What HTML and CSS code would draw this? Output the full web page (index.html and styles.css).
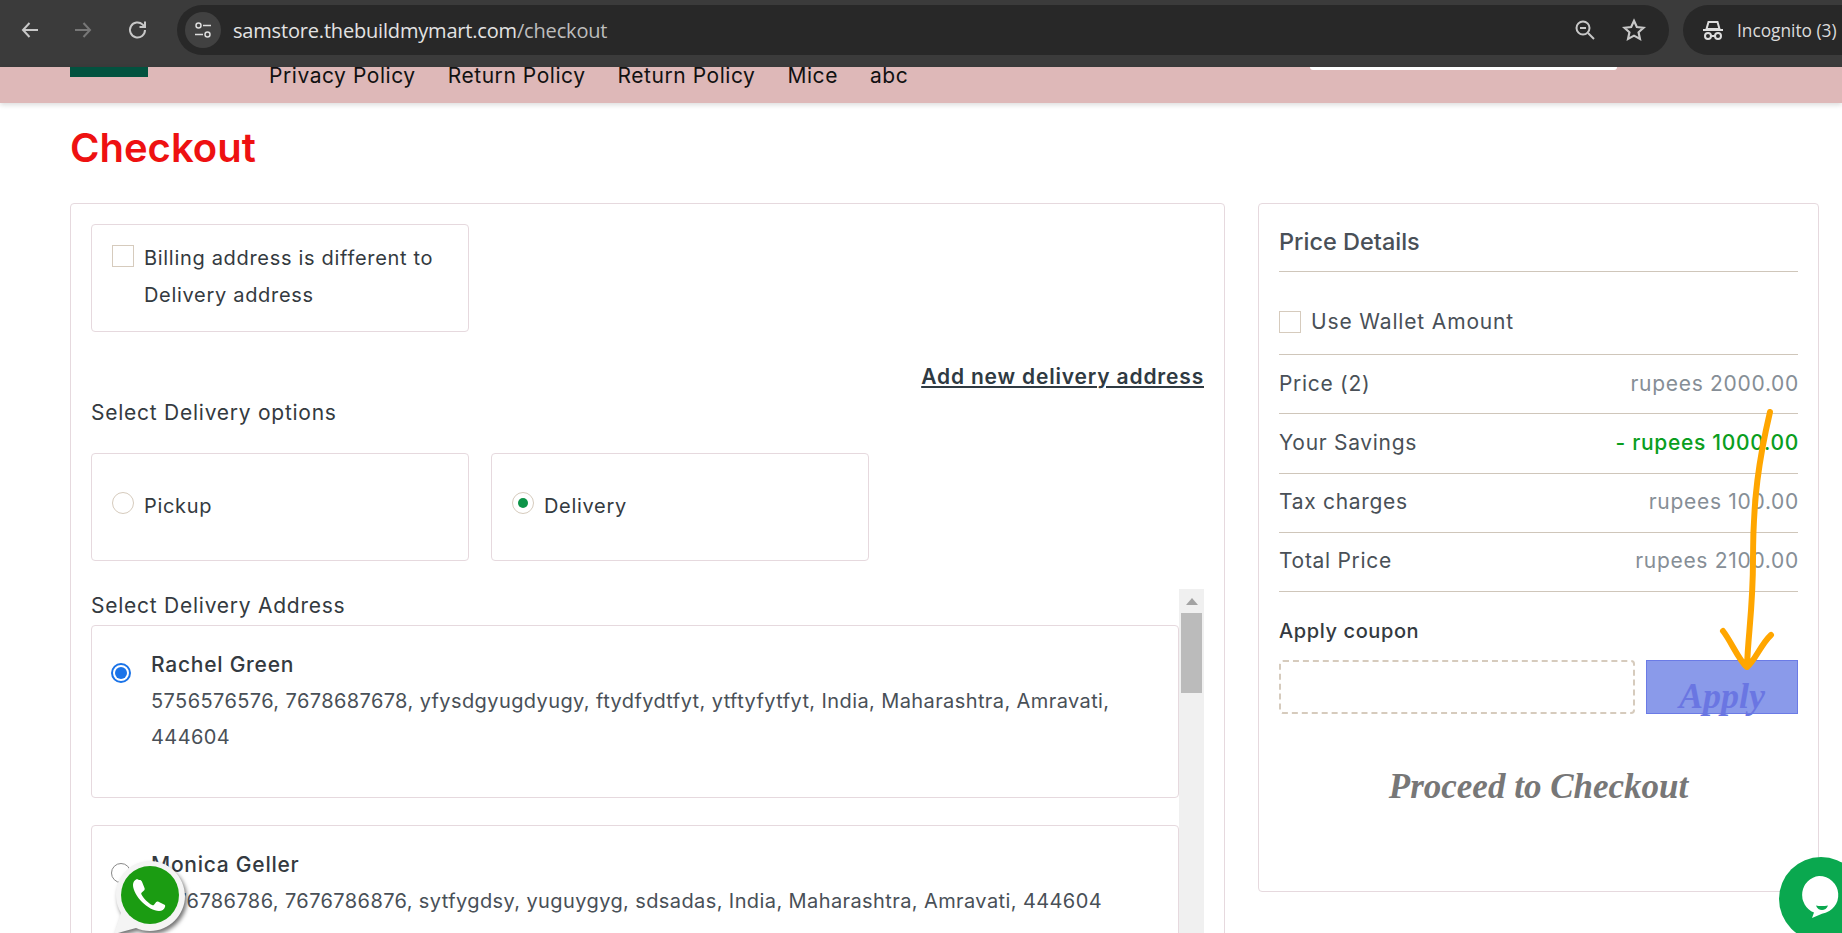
FILE: index.html
```html
<!DOCTYPE html>
<html lang="en">
<head>
<meta charset="utf-8">
<title>Checkout</title>
<link rel="stylesheet" href="styles.css">
</head>
<body>
<div class="toolbar">
  <svg class="tb-icon" width="24" height="24" viewBox="0 0 24 24"><path d="M20 12H5M11.500 5 5 12l6.500 7" fill="none" stroke="#c8c8c8" stroke-width="2"/></svg>
  <svg class="tb-icon" width="24" height="24" viewBox="0 0 24 24"><path d="M4 12h15M12.500 5 19 12l-6.500 7" fill="none" stroke="#777" stroke-width="2"/></svg>
  <svg class="tb-icon" width="24" height="24" viewBox="0 0 24 24"><path d="M19 12a7.500 7.500 0 1 1-2.300-5.400L19 9M19 3.500V9h-5.500" fill="none" stroke="#c8c8c8" stroke-width="2"/></svg>
  <div class="omnibox">
    <span class="tune">
      <svg width="20" height="20" viewBox="0 0 20 20"><circle cx="5.500" cy="5.500" r="2.500" fill="none" stroke="#ddd" stroke-width="1.500"/><path d="M10 5.500h8M2 14.500h8" stroke="#ddd" stroke-width="1.500"/><circle cx="14.500" cy="14.500" r="2.500" fill="none" stroke="#ddd" stroke-width="1.500"/></svg>
    </span>
    <span class="url">samstore.thebuildmymart.com<span class="url-path">/checkout</span></span>
    <svg class="omni-zoom" width="24" height="24" viewBox="0 0 24 24"><circle cx="10" cy="10" r="6.500" fill="none" stroke="#c8c8c8" stroke-width="2"/><path d="M15 15l6 6" stroke="#c8c8c8" stroke-width="2"/><path d="M7 10h6" stroke="#c8c8c8" stroke-width="2"/></svg>
    <svg class="omni-star" width="26" height="26" viewBox="0 0 24 24"><path d="M12 3.500l2.600 5.700 6.200.7-4.600 4.200 1.300 6.100L12 17.200l-5.500 3 1.300-6.100-4.600-4.200 6.200-.7z" fill="none" stroke="#c8c8c8" stroke-width="2" stroke-linejoin="miter"/></svg>
  </div>
  <div class="incognito">
    <svg width="24" height="24" viewBox="0 0 24 24"><path d="M7.500 4h9l2 7h-13zM2 12h20" fill="none" stroke="#ddd" stroke-width="2"/><circle cx="7" cy="18" r="3" fill="none" stroke="#ddd" stroke-width="2"/><circle cx="17" cy="18" r="3" fill="none" stroke="#ddd" stroke-width="2"/><path d="M10 18h4" stroke="#ddd" stroke-width="2"/></svg>
    <span>Incognito (3)</span>
  </div>
</div>

<header class="site-header">
  <div class="logo"></div>
  <nav class="nav">
    <a>Privacy Policy</a>
    <a>Return Policy</a>
    <a>Return Policy</a>
    <a>Mice</a>
    <a>abc</a>
  </nav>
  <div class="search"></div>
</header>

<main class="page">
  <h1 class="title">Checkout</h1>
  <div class="columns">
    <section class="card left">
      <div class="option billing">
        <span class="check"></span>
        <span class="option-text">Billing address is different to<br>Delivery address</span>
      </div>
      <div class="add-row"><a class="add-link">Add new delivery address</a></div>
      <div class="label options-label">Select Delivery options</div>
      <div class="options">
        <div class="option choice"><span class="radio"></span><span class="option-text">Pickup</span></div>
        <div class="option choice"><span class="radio selected"></span><span class="option-text">Delivery</span></div>
      </div>
      <div class="scroller">
        <div class="addresses">
          <div class="label address-label">Select Delivery Address</div>
          <div class="address first">
            <span class="addr-radio on"></span>
            <div class="addr-body">
              <div class="addr-name">Rachel Green</div>
              <div class="addr-text">5756576576, 7678687678, yfysdgyugdyugy, ftydfydtfyt, ytftyfytfyt, India, Maharashtra, Amravati, 444604</div>
            </div>
          </div>
          <div class="address">
            <span class="addr-radio"></span>
            <div class="addr-body">
              <div class="addr-name">Monica Geller</div>
              <div class="addr-text">7676786786, 7676786876, sytfygdsy, yuguygyg, sdsadas, India, Maharashtra, Amravati, 444604</div>
            </div>
          </div>
        </div>
        <div class="scrollbar">
          <span class="scroll-up"></span>
          <span class="scroll-thumb"></span>
        </div>
      </div>
    </section>

    <aside class="card right">
      <h2 class="price-title">Price Details</h2>
      <div class="wallet"><span class="check"></span><span>Use Wallet Amount</span></div>
      <div class="row"><span>Price (2)</span><span class="amount">rupees 2000.00</span></div>
      <div class="row"><span>Your Savings</span><span class="amount saving">- rupees 1000.00</span></div>
      <div class="row"><span>Tax charges</span><span class="amount">rupees 100.00</span></div>
      <div class="row"><span>Total Price</span><span class="amount">rupees 2100.00</span></div>
      <div class="coupon-label">Apply coupon</div>
      <div class="coupon">
        <div class="coupon-input"></div>
        <div class="coupon-btn">Apply</div>
      </div>
      <div class="proceed">Proceed to Checkout</div>
    </aside>
  </div>
</main>

<svg class="arrow" width="90" height="280" viewBox="0 0 90 280"><path d="M61 3C50 50 44 90 44 150C44 200 39 225 38 258M14 222C22 232 30 252 38 258C46 252 52 235 62 226" fill="none" stroke="#ffa600" stroke-width="6" stroke-linecap="round" stroke-linejoin="round"/></svg>

<svg class="whatsapp" width="80" height="80" viewBox="0 0 80 80"><path d="M39 3C20 3 5 18 5 37c0 7 2 13 5 18L3 76l22-6c4 2 9 3 14 3 19 0 35-16 35-35S58 3 39 3z" fill="#f4f4f4"/><circle cx="39" cy="37" r="29" fill="#1b9c12"/><path d="M26 21c-2.500 1-4 3-4 6 0 5 4 12 9 17 5 5 12 9 17 9 3 0 5-1.500 6-4 .4-1 .2-1.800-.5-2.200l-6-3c-1-.5-1.800-.3-2.500.5l-2 2.500c-.6.7-1.200.7-2 .3-4-2-8.500-6.500-10.500-10.500-.4-.8-.4-1.400.3-2l2.200-2.200c.7-.7.9-1.500.5-2.500l-2.600-6.300c-.6-1.400-1.500-1.800-2.900-1.500z" fill="#fff"/></svg>

<svg class="chat" width="64" height="76" viewBox="0 0 64 76"><circle cx="43" cy="42" r="42" fill="#0aa84f"/><path d="M41 19a19 19 0 0 1 3 37.800L34 61l2-5.500A19 19 0 0 1 41 19z" fill="#fff"/><path d="M38 48.500c3 .8 8 .8 12 0-1 3-3.500 4.500-6 4.500s-5-1.500-6-4.500z" fill="#0aa84f"/></svg>
</body>
</html>
```

FILE: styles.css
```css
* { box-sizing: border-box; }
html, body { margin: 0; height: 100%; }
body {
  position: relative;
  overflow: hidden;
  background: #fff;
  font-family: "Inter", "Noto Sans", sans-serif;
  color: #343a40;
}

.toolbar {
  display: flex;
  align-items: center;
  height: 67px;
  padding-bottom: 7px;
  background: #3b3b3b;
}
.tb-icon { flex: none; margin-left: 18px; }
.tb-icon + .tb-icon { margin-left: 29px; }
.tb-icon + .tb-icon + .tb-icon { margin-left: 31px; }
.omnibox {
  flex: none;
  display: flex;
  align-items: center;
  width: 1492px;
  height: 50px;
  margin-left: 27px;
  border-radius: 25px;
  background: #282828;
  color: #e3e3e3;
}
.tune {
  display: flex;
  align-items: center;
  justify-content: center;
  width: 36px;
  height: 36px;
  margin-left: 8px;
  border-radius: 50%;
  background: #414141;
}
.url {
  margin-left: 12px;
  font-family: "Open Sans", sans-serif;
  font-size: 20px;
  letter-spacing: -0.18px;
  color: #e3e3e3;
}
.url-path { color: #bdbdbd; }
.omni-zoom { margin-left: auto; margin-right: 24px; }
.omni-star { margin-right: 22px; }
.incognito {
  flex: none;
  display: flex;
  align-items: center;
  gap: 12px;
  width: 159px;
  height: 50px;
  margin-left: 14px;
  padding-left: 18px;
  border-radius: 25px 0 0 25px;
  background: #282828;
  color: #dcdcdc;
  font-family: "Open Sans", sans-serif;
  font-size: 17.300px;
  white-space: nowrap;
}

.site-header {
  display: flex;
  align-items: flex-start;
  height: 36px;
  background: #deb8b8;
  box-shadow: 0 2px 5px rgba(0, 0, 0, .14);
}
.logo { width: 78px; height: 10px; margin-left: 70px; background: #02523f; }
.nav {
  display: flex;
  gap: 32px;
  margin-left: 121px;
  color: #111;
  font-size: 21px;
  letter-spacing: .55px;
  line-height: 17px;
}
.search {
  width: 307px;
  height: 3px;
  margin-left: auto;
  margin-right: 225px;
  border-radius: 0 0 3px 3px;
  background: #fff;
}

.page { padding: 0 24px 0 70px; }
.title {
  margin: 21px 0 0;
  color: #ee1111;
  font-size: 40px;
  font-weight: 600;
  line-height: 48px;
  height: 79px;
}
.columns { display: flex; align-items: flex-start; gap: 33px; }
.card {
  border: 1px solid #e6d9de;
  border-radius: 4px;
  background: #fff;
}
.left { flex: none; width: 1155px; height: 800px; padding: 20px; }
.right { flex: none; width: 561px; height: 689px; padding: 20px; }

.option {
  display: flex;
  width: 378px;
  padding: 20px;
  border: 1px solid #e6d9de;
  border-radius: 4px;
  font-size: 20px;
  letter-spacing: .69px;
  color: #343a40;
}
.billing { height: 108px; }
.option-text { margin-left: 10px; line-height: 37px; margin-top: -5px; }
.check {
  flex: none;
  width: 22px;
  height: 22px;
  border: 1px solid #d6cbbd;
  background: #fff;
}
.add-row { display: flex; justify-content: flex-end; margin-top: 30px; }
.add-link {
  color: #2f3a42;
  font-size: 21px;
  font-weight: 600;
  letter-spacing: .82px;
  line-height: 30px;
  text-decoration: underline;
}
.label { color: #343a40; font-size: 21px; letter-spacing: .75px; line-height: 30px; }
.options-label { margin-top: 6px; }
.options { display: flex; gap: 22px; margin-top: 25px; }
.choice { height: 108px; padding-top: 38px; }
.choice .option-text { margin-top: -1px; line-height: 30px; }
.radio {
  flex: none;
  position: relative;
  width: 22px;
  height: 22px;
  border: 1px solid #d6cbbd;
  border-radius: 50%;
}
.radio.selected::after {
  content: "";
  position: absolute;
  top: 5px;
  left: 5px;
  width: 10px;
  height: 10px;
  border-radius: 50%;
  background: #0d9448;
}

.scroller { display: flex; margin-top: 28px; }
.addresses { flex: none; width: 1088px; }
.address-label { height: 36px; padding-top: 2px; }
.address {
  display: flex;
  height: 173px;
  padding: 24px 20px 0 19px;
  border: 1px solid #e6d9de;
  border-radius: 4px;
}
.address.first { margin-bottom: 27px; }
.addr-radio {
  flex: none;
  position: relative;
  width: 20px;
  height: 20px;
  margin-top: 13px;
  border: 1px solid #888;
  border-radius: 50%;
  background: #fff;
}
.addr-radio.on { border: 2px solid #1a73e8; }
.addr-radio.on::after {
  content: "";
  position: absolute;
  top: 2px;
  left: 2px;
  width: 12px;
  height: 12px;
  border-radius: 50%;
  background: #1a73e8;
}
.addr-body { margin-left: 20px; }
.addr-name { color: #343a40; font-size: 21px; font-weight: 500; letter-spacing: .75px; line-height: 30px; }
.addr-text { margin-top: 3px; color: #495057; font-size: 20px; letter-spacing: .4px; line-height: 36px; }
.scrollbar {
  flex: none;
  position: relative;
  width: 25px;
  height: 345px;
  background: #f0f0f0;
  padding: 9px 2px 0;
}
.scroll-up {
  display: block;
  width: 0;
  height: 0;
  margin: 0 auto;
  border-left: 6px solid transparent;
  border-right: 6px solid transparent;
  border-bottom: 7px solid #a3a3a3;
}
.scroll-thumb { display: block; height: 80px; margin-top: 8px; background: #bbb; }

.price-title {
  margin: 0;
  height: 48px;
  border-bottom: 1px solid #cfc6ba;
  color: #495057;
  font-size: 23.500px;
  font-weight: 500;
  line-height: 36px;
}
.wallet {
  display: flex;
  align-items: center;
  gap: 10px;
  height: 83px;
  padding-top: 17px;
  border-bottom: 1px solid #cfc6ba;
  color: #495057;
  font-size: 21px;
  letter-spacing: .85px;
}
.row {
  display: flex;
  align-items: center;
  justify-content: space-between;
  height: 59.250px;
  padding-bottom: 2px;
  border-bottom: 1px solid #cfc6ba;
  color: #495057;
  font-size: 21px;
  letter-spacing: .7px;
}
.amount { margin-right: -1px; color: #868e96; }
.amount.saving { color: #0a9e1e; font-weight: 500; }
.coupon-label { margin-top: 24px; color: #343a40; font-size: 20px; font-weight: 500; letter-spacing: .6px; line-height: 30px; }
.coupon { display: flex; gap: 11px; margin-top: 14px; }
.coupon-input {
  width: 356px;
  height: 54px;
  border: 2px dashed #d6cbbd;
  border-radius: 4px;
}
.coupon-btn {
  flex: 1;
  height: 54px;
  padding-top: 12px;
  border: 1px solid #6b7be6;
  background: #8a9aea;
  color: #6a76e2;
  font-family: "Liberation Serif", serif;
  font-size: 36px;
  font-style: italic;
  font-weight: 700;
  line-height: 46px;
  text-align: center;
}
.proceed {
  margin-top: 53px;
  color: #777;
  font-family: "Liberation Serif", serif;
  font-size: 35px;
  font-style: italic;
  font-weight: 700;
  line-height: 40px;
  text-align: center;
}

.arrow { position: absolute; left: 1709px; top: 409px; }
.whatsapp { position: absolute; left: 111px; top: 858px; filter: drop-shadow(2px 3px 2px rgba(0,0,0,.55)); }
.chat { position: absolute; right: 0; top: 857px; }
```
